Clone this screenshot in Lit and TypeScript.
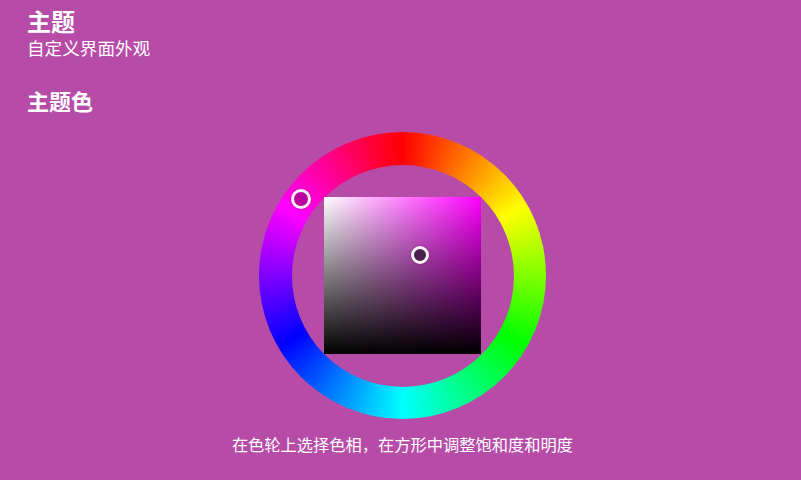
import { LitElement, html, css } from "lit";
import { customElement } from "lit/decorators.js";

@customElement("app-root")
export class AppRoot extends LitElement {
  static styles = css`
    :host {
      display: block;
      width: 801px;
      height: 480px;
      overflow: hidden;
      background: #b74ba8;
      color: #fff;
      font-family: "Liberation Sans", "Noto Sans CJK SC", sans-serif;
    }
    .page {
      display: flex;
      flex-direction: column;
      padding: 8px 23px 0 27px;
      box-sizing: border-box;
      height: 480px;
    }
    .title { margin: 0; font-size: 24px; line-height: 30px; font-weight: 700; }
    .sub { margin: 0; font-size: 17.6px; line-height: 22px; }
    .section { margin: 30px 0 0; font-size: 22px; line-height: 26px; font-weight: 700; }
    .picker { display: flex; justify-content: center; margin: 16px 0 0; }
    .wheel {
      position: relative;
      width: 287px;
      height: 287px;
      border-radius: 50%;
      display: flex;
      align-items: center;
      justify-content: center;
      background: conic-gradient(#f00, #ff0, #0f0, #0ff, #00f, #f0f, #f00);
    }
    .hole {
      width: 222px;
      height: 222px;
      border-radius: 50%;
      background: #b74ba8;
      display: flex;
      align-items: center;
      justify-content: center;
    }
    .square {
      position: relative;
      width: 157px;
      height: 157px;
      background:
        linear-gradient(to bottom, transparent, #000),
        linear-gradient(to right, #fff, transparent),
        #f0f;
    }
    .thumb {
      position: absolute;
      box-sizing: border-box;
      border-radius: 50%;
      border: 3px solid #f4f0f4;
      box-shadow: 0 0 2px rgba(0,0,0,.3);
      transform: translate(-50%, -50%);
    }
    .hue { left: 42px; top: 67px; width: 20px; height: 20px; background: #bb00a2; }
    .sv { left: 95.5px; top: 58px; width: 18px; height: 18px; background: #4a1f50; }
    .hint { margin: 16px 0 0; text-align: center; font-size: 16.25px; line-height: 20px; }
  `;

  render() {
    return html`
      <div class="page">
        <h1 class="title">主题</h1>
        <p class="sub">自定义界面外观</p>
        <h2 class="section">主题色</h2>
        <div class="picker">
          <div class="wheel">
            <div class="hole">
              <div class="square">
                <div class="thumb sv"></div>
              </div>
            </div>
            <div class="thumb hue"></div>
          </div>
        </div>
        <p class="hint">在色轮上选择色相，在方形中调整饱和度和明度</p>
      </div>
    `;
  }
}
